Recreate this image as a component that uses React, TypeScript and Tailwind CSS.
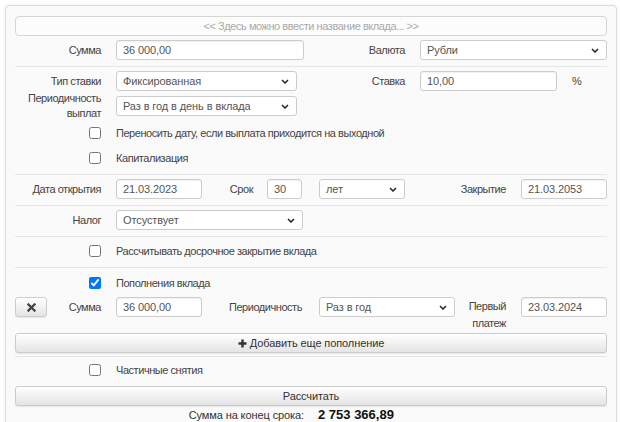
import React from "react";

const Chevron = () => (
  <svg width="8" height="5" viewBox="0 0 8 5" className="shrink-0">
    <path d="M1 1l3 3 3-3" fill="none" stroke="#222" strokeWidth="1.5" />
  </svg>
);

function Input({ value, w }: { value: string; w: string }) {
  return (
    <div
      className={`${w} h-[20px] shrink-0 flex items-center px-[6px] bg-white border border-[#ccc] rounded-[3px] text-[#555] text-[11px] tracking-[-0.1px] shadow-[inset_0_1px_1px_rgba(0,0,0,0.06)]`}
    >
      {value}
    </div>
  );
}

function Select({ value, w }: { value: string; w: string }) {
  return (
    <div
      className={`${w} h-[20px] shrink-0 flex items-center justify-between pl-[6px] pr-[7px] bg-white border border-[#ccc] rounded-[3px] text-[#555] text-[11px] tracking-[-0.1px]`}
    >
      <span>{value}</span>
      <Chevron />
    </div>
  );
}

function Label({ children, w }: { children: React.ReactNode; w: string }) {
  return <div className={`${w} shrink-0 text-right text-[#444]`}>{children}</div>;
}

function Separator({ mb = "mb-[4px]", mt = "mt-[6px]" }: { mb?: string; mt?: string }) {
  return <div className={`${mt} ${mb} h-px bg-[#e6e6e6]`} />;
}

function CheckRow({ label, checked = false, mt }: { label: string; checked?: boolean; mt: string }) {
  return (
    <div className={`${mt} h-[20px] flex items-center`}>
      <div className="w-[86px] shrink-0 flex justify-end">
        <input type="checkbox" defaultChecked={checked} className="m-0 w-[12px] h-[12px]" />
      </div>
      <div className="ml-[15px] text-[#444]">{label}</div>
    </div>
  );
}

function Button({ children, w = "w-full", mt = "" }: { children: React.ReactNode; w?: string; mt?: string }) {
  return (
    <div
      className={`${w} ${mt} h-[20px] shrink-0 flex items-center justify-center gap-[3px] border border-[#ccc] rounded-[3px] bg-gradient-to-b from-white to-[#e4e4e4] text-[#333] text-[11px] tracking-[-0.1px] shadow-[0_1px_1px_rgba(0,0,0,0.08)]`}
    >
      {children}
    </div>
  );
}

export default function App() {
  return (
    <div className="w-[620px] h-[422px] overflow-hidden bg-white pt-[5px] pl-[5px] font-['Liberation_Sans',Arial,sans-serif] text-[11px] tracking-[-0.45px] leading-[15px]">
      <div className="w-[612px] h-[440px] border border-[#ddd] rounded-[4px] bg-[#fafafa] px-[9px] pt-[10px] shadow-[0_0_3px_rgba(0,0,0,0.08)]">
        {/* deposit name */}
        <div className="h-[20px] flex items-center justify-center border border-[#d5d5d5] rounded-[4px] bg-[#fcfcfc] text-[#aaa]">
          {"<< Здесь можно ввести название вклада... >>"}
        </div>

        <div className="mt-[4px] h-[20px] flex items-center">
          <Label w="w-[86px]">Сумма</Label>
          <div className="ml-[15px]">
            <Input value="36 000,00" w="w-[188px]" />
          </div>
          <Label w="w-[101px]">Валюта</Label>
          <div className="ml-[15px]">
            <Select value="Рубли" w="w-[187px]" />
          </div>
        </div>

        <Separator />

        <div className="h-[20px] flex items-center">
          <Label w="w-[86px]">Тип ставки</Label>
          <div className="ml-[15px]">
            <Select value="Фиксированная" w="w-[181px]" />
          </div>
          <Label w="w-[108px]">Ставка</Label>
          <div className="ml-[15px]">
            <Input value="10,00" w="w-[137px]" />
          </div>
          <div className="ml-[15px] text-[#444]">%</div>
        </div>

        <div className="h-[30px] flex items-center">
          <Label w="w-[86px]">
            Периодичность
            <br />
            выплат
          </Label>
          <div className="ml-[15px]">
            <Select value="Раз в год в день в вклада" w="w-[181px]" />
          </div>
        </div>

        <CheckRow mt="mt-[2px]" label="Переносить дату, если выплата приходится на выходной" />
        <CheckRow mt="mt-[5px]" label="Капитализация" />

        <Separator />

        <div className="h-[20px] flex items-center">
          <Label w="w-[86px]">Дата открытия</Label>
          <div className="ml-[15px]">
            <Input value="21.03.2023" w="w-[86px]" />
          </div>
          <Label w="w-[51px]">Срок</Label>
          <div className="ml-[14px]">
            <Input value="30" w="w-[35px]" />
          </div>
          <div className="ml-[17px]">
            <Select value="лет" w="w-[86px]" />
          </div>
          <Label w="w-[101px]">Закрытие</Label>
          <div className="ml-[15px]">
            <Input value="21.03.2053" w="w-[86px]" />
          </div>
        </div>

        <Separator />

        <div className="h-[20px] flex items-center">
          <Label w="w-[86px]">Налог</Label>
          <div className="ml-[15px]">
            <Select value="Отсуствует" w="w-[187px]" />
          </div>
        </div>

        <Separator />

        <CheckRow mt="" label="Рассчитывать досрочное закрытие вклада" />

        <Separator mb="mb-[5px]" />

        <CheckRow mt="" checked label="Пополнения вклада" />

        <div className="mt-[4px] h-[35px] flex items-start">
          <Button w="w-[32px]">
            <svg width="9" height="9" viewBox="0 0 9 9">
              <path d="M1.5 1.5l6 6M7.5 1.5l-6 6" stroke="#444" strokeWidth="2.3" strokeLinecap="square" />
            </svg>
          </Button>
          <div className="h-[20px] flex items-center">
            <Label w="w-[54px]">Сумма</Label>
          </div>
          <div className="ml-[15px]">
            <Input value="36 000,00" w="w-[86px]" />
          </div>
          <div className="h-[20px] flex items-center">
            <Label w="w-[100px]">Периодичность</Label>
          </div>
          <div className="ml-[17px]">
            <Select value="Раз в год" w="w-[136px]" />
          </div>
          <div className="pt-[1px] leading-[17px]">
            <Label w="w-[51px]">
              Первый
              <br />
              платеж
            </Label>
          </div>
          <div className="ml-[15px]">
            <Input value="23.03.2024" w="w-[86px]" />
          </div>
        </div>

        <Button mt="mt-[1px]">
          <svg width="9" height="9" viewBox="0 0 9 9">
            <path d="M4.5 0.5v8M0.5 4.5h8" stroke="#333" strokeWidth="2.4" />
          </svg>
          <span>Добавить еще пополнение</span>
        </Button>

        <Separator mt="mt-[3px]" mb="mb-[3px]" />

        <CheckRow mt="" label="Частичные снятия" />

        <Button mt="mt-[6px]">Рассчитать</Button>

        <div className="mt-[2px] flex leading-[14px]">
          <div className="w-1/2 pr-[7px] text-right text-[#333] tracking-[-0.1px]">Сумма на конец срока:</div>
          <div className="w-1/2 pl-[7px] font-bold text-[#111] text-[13px] tracking-normal">2 753 366,89</div>
        </div>
      </div>
    </div>
  );
}
